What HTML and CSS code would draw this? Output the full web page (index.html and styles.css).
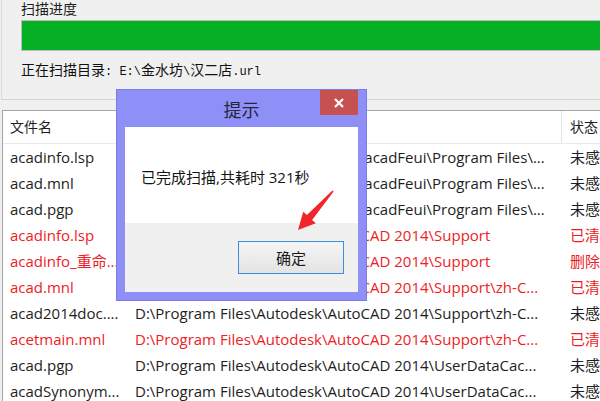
FILE: index.html
```html
<!DOCTYPE html>
<html lang="zh-CN">
<head>
    <meta charset="UTF-8">
    <title>扫描进度</title>
    <link rel="stylesheet" href="styles.css">
</head>
<body>
    <div class="group">
        <div class="label">扫描进度</div>
        <div class="bar"><div class="fill"></div></div>
        <div class="path">正在扫描目录<span class="mono">: E:\</span>金水坊<span class="mono">\</span>汉二店<span class="mono">.url</span></div>
    </div>

    <div class="list">
        <div class="row head">
            <div class="c1">文件名</div>
            <div class="c2"></div>
            <div class="c3">状态</div>
        </div>
        <div class="row">
            <div class="c1">acadinfo.lsp</div>
            <div class="c2">D:\Program Files\Autodesk\Tmp\acadFeui\Program Files\...</div>
            <div class="c3">未感染</div>
        </div>
        <div class="row">
            <div class="c1">acad.mnl</div>
            <div class="c2">D:\Program Files\Autodesk\Tmp\acadFeui\Program Files\...</div>
            <div class="c3">未感染</div>
        </div>
        <div class="row">
            <div class="c1">acad.pgp</div>
            <div class="c2">D:\Program Files\Autodesk\Tmp\acadFeui\Program Files\...</div>
            <div class="c3">未感染</div>
        </div>
        <div class="row red">
            <div class="c1">acadinfo.lsp</div>
            <div class="c2">D:\Program Files\Autodesk\AutoCAD 2014\Support</div>
            <div class="c3">已清除</div>
        </div>
        <div class="row red">
            <div class="c1">acadinfo_重命...</div>
            <div class="c2">D:\Program Files\Autodesk\AutoCAD 2014\Support</div>
            <div class="c3">删除</div>
        </div>
        <div class="row red">
            <div class="c1">acad.mnl</div>
            <div class="c2">D:\Program Files\Autodesk\AutoCAD 2014\Support\zh-C...</div>
            <div class="c3">已清除</div>
        </div>
        <div class="row">
            <div class="c1">acad2014doc....</div>
            <div class="c2">D:\Program Files\Autodesk\AutoCAD 2014\Support\zh-C...</div>
            <div class="c3">未感染</div>
        </div>
        <div class="row red">
            <div class="c1">acetmain.mnl</div>
            <div class="c2">D:\Program Files\Autodesk\AutoCAD 2014\Support\zh-C...</div>
            <div class="c3">已清除</div>
        </div>
        <div class="row">
            <div class="c1">acad.pgp</div>
            <div class="c2">D:\Program Files\Autodesk\AutoCAD 2014\UserDataCac...</div>
            <div class="c3">未感染</div>
        </div>
        <div class="row">
            <div class="c1">acadSynonym...</div>
            <div class="c2">D:\Program Files\Autodesk\AutoCAD 2014\UserDataCac...</div>
            <div class="c3">未感染</div>
        </div>
    </div>

    <div class="dialog">
        <div class="title">提示</div>
        <div class="close">
            <svg width="12" height="12" viewBox="0 0 12 12"><path d="M2 2 L10 10 M10 2 L2 10" stroke="#fff" stroke-width="2.2"/></svg>
        </div>
        <div class="msg">已完成扫描,共耗时 321秒</div>
        <div class="foot">
            <button class="ok">确定</button>
        </div>
    </div>

    <svg class="arrow" width="600" height="401" viewBox="0 0 600 401">
        <path d="M298 230 L303.2 211.7 L306.9 215.1 L332.4 190.5 L333.6 191.5 L312.1 219.9 L315.8 223.3 Z" fill="#f0262b"/>
    </svg>
</body>
</html>
```

FILE: styles.css
```css
body {
    margin: 0;
    width: 600px;
    height: 401px;
    overflow: hidden;
    background: #f0f0f0;
    font-family: "Open Sans", "Noto Sans CJK SC", sans-serif;
    color: #1e1e1e;
    position: relative;
}
.group {
    height: 99px;
    margin-left: 1px;
    padding-left: 19px;
    border-left: 1px solid #dadada;
    border-bottom: 1px solid #d5d5d5;
    font-size: 14px;
    font-family: "Noto Sans CJK SC", sans-serif;
}
.label {
    height: 16px;
    line-height: 16px;
}
.bar {
    margin-top: 4px;
    height: 29px;
    border: 1px solid #bcbcbc;
    border-right: none;
    background: #e6e6e6;
}
.fill {
    height: 100%;
    background: #06b025;
}
.path {
    margin-top: 9px;
    line-height: 18px;
    color: #111;
}
.mono {
    font-family: "Liberation Mono", monospace;
    font-size: 12px;
}
.list {
    margin: 10px 0 0 2px;
    border-top: 1px solid #a5a5a5;
    border-left: 1px solid #a5a5a5;
    background: #fff;
    height: 300px;
    font-size: 15px;
}
.row {
    display: grid;
    grid-template-columns: 132px 427px 1fr;
    height: 26px;
    line-height: 26px;
    white-space: nowrap;
}
.row > div {
    overflow: hidden;
}
.c1 {
    padding-left: 7px;
}
.c3 {
    padding-left: 8px;
}
.head {
    height: 32px;
    line-height: 31px;
    border-bottom: 1px solid #eaeaea;
    font-family: "Noto Sans CJK SC", sans-serif;
    font-size: 14px;
}
.head .c2 {
    border-right: 1px solid #e3e3e3;
}
.red {
    color: #ee1c25;
}
.dialog {
    position: absolute;
    left: 116px;
    top: 89px;
    width: 233px;
    height: 202px;
    border: 1px solid #7c7ce6;
    background: #8f8ff8;
    padding: 0 8px 8px;
    display: flex;
    flex-direction: column;
}
.title {
    height: 37px;
    line-height: 38px;
    text-align: center;
    font-family: "Noto Sans CJK SC", sans-serif;
    font-size: 18px;
    color: #262638;
}
.close {
    position: absolute;
    right: 8px;
    top: 0;
    width: 38px;
    height: 25px;
    background: #c75050;
    display: flex;
    align-items: center;
    justify-content: center;
}
.close svg {
    display: block;
}
.msg {
    height: 96px;
    background: #fff;
    padding-left: 16px;
    line-height: 100px;
    font-size: 15px;
    color: #141414;
}
.foot {
    flex: 1;
    background: #f0f0f0;
    display: flex;
    justify-content: flex-end;
    align-items: flex-start;
    padding: 18px 14px 0 0;
}
.ok {
    width: 106px;
    height: 33px;
    border: 1px solid #3d8ee0;
    background: linear-gradient(#f5f5f5, #e3e3e3);
    font-family: "Noto Sans CJK SC", sans-serif;
    font-size: 15px;
    color: #1a1a1a;
    padding: 0;
}
.arrow {
    position: absolute;
    left: 0;
    top: 0;
    pointer-events: none;
}
```
